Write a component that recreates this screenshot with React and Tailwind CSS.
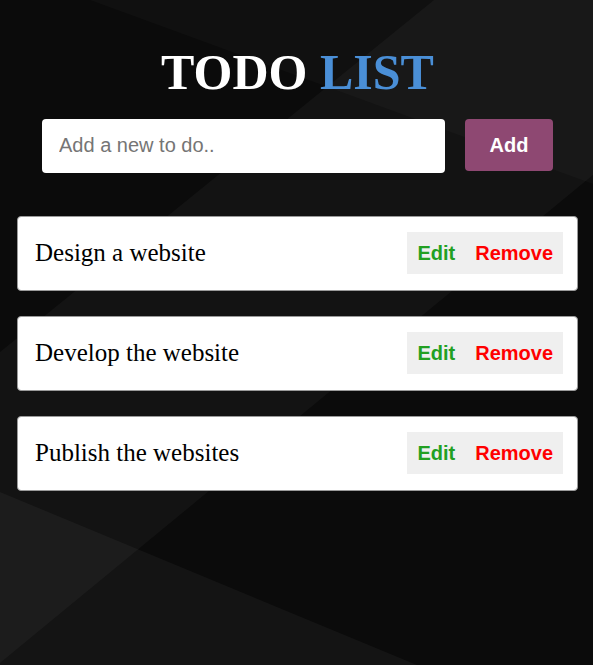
import React, { useState } from 'react';

const Background = () => (
  <svg className="absolute inset-0 w-full h-full" viewBox="0 0 593 665" preserveAspectRatio="none">
    <rect width="593" height="665" fill="#0b0b0b" />
    <polygon points="0,352 434,0 593,0 593,175 0,663" fill="#ffffff" fillOpacity="0.035" />
    <polygon points="90,0 593,0 593,184" fill="#ffffff" fillOpacity="0.025" />
    <polygon points="0,492 417,665 0,665" fill="#ffffff" fillOpacity="0.04" />
  </svg>
);

const App = () => {
  const [todos] = useState(['Design a website', 'Develop the website', 'Publish the websites']);
  const [text, setText] = useState('');

  return (
    <div className="relative min-h-[665px] w-full overflow-hidden">
      <Background />
      <div className="relative pt-[44px] pl-[17px] pr-[15px]">
        <h1 className="text-center text-[50px] font-bold leading-[1.15] text-white font-['Liberation_Serif',serif]">
          TODO <span className="text-[#4a8fd7]">LIST</span>
        </h1>

        <div className="mt-[17px] flex items-start justify-center gap-[20px] font-['Liberation_Sans',Arial,sans-serif]">
          <input
            type="text"
            value={text}
            onChange={(e) => setText(e.target.value)}
            placeholder="Add a new to do.."
            className="w-[403px] h-[54px] rounded-[4px] bg-white px-[17px] text-[20px] text-black placeholder-[#757575] outline-none"
          />
          <button className="w-[88px] h-[52px] rounded-[4px] bg-[#8e4872] text-[20px] font-bold text-white">
            Add
          </button>
        </div>

        <div className="mt-[43px] flex flex-col gap-[25px]">
          {todos.map((todo) => (
            <div
              key={todo}
              className="flex h-[75px] items-center justify-between rounded-[4px] border border-[#9a9a9a] bg-white pl-[17px] pr-[14px]"
            >
              <span className="text-[25px] text-black font-['Liberation_Serif',serif]">{todo}</span>
              <div className="flex h-[42px] items-center gap-[20px] bg-[#efefef] px-[10px] text-[20px] font-bold font-['Liberation_Sans',Arial,sans-serif]">
                <button className="text-[#22a022]">Edit</button>
                <button className="text-[#ff0000]">Remove</button>
              </div>
            </div>
          ))}
        </div>
      </div>
    </div>
  );
};

export default App;
